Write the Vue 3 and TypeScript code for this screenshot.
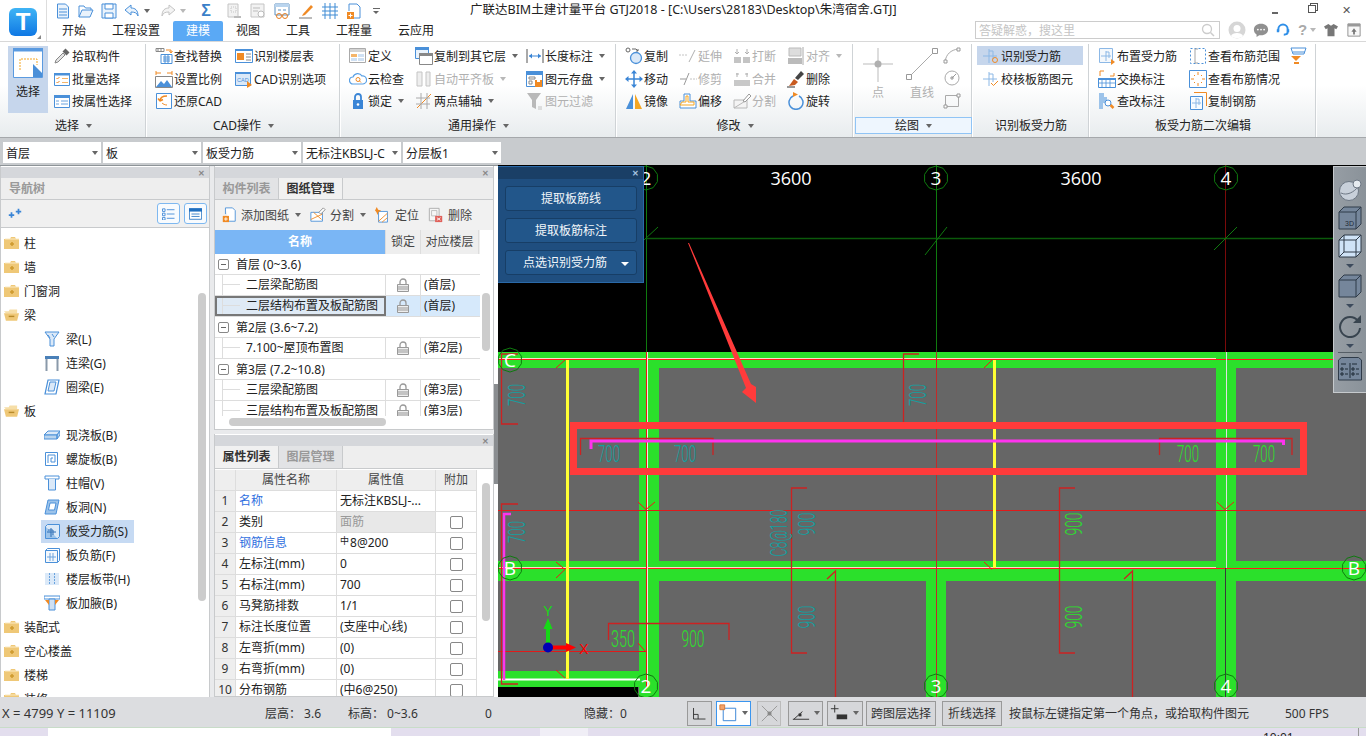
<template>
  <div class="app">
    <svg class="sprite" xmlns="http://www.w3.org/2000/svg">
      <!-- quick access -->
      <symbol id="q-new" viewBox="0 0 16 16"><path d="M2.5 1h8l3 3v11h-11z" fill="#eaf3fc" stroke="#4a90d9"/><path d="M4 6h8M4 9h8M4 12h8" stroke="#4a90d9"/></symbol>
      <symbol id="q-open" viewBox="0 0 16 16"><path d="M1 14V3h5l1.500 2H13v2" fill="none" stroke="#4a90d9"/><path d="M1 14l3-7h11l-3 7z" fill="#eaf3fc" stroke="#4a90d9"/></symbol>
      <symbol id="q-save" viewBox="0 0 16 16"><path d="M1 1h14v14H1z" fill="#eaf3fc" stroke="#4a90d9"/><path d="M4 1h8v5H4zM4 10h8v5H4z" fill="#fff" stroke="#4a90d9"/></symbol>
      <symbol id="q-undo" viewBox="0 0 16 16"><path d="M7 2L1 7l6 5V9c4 0 6 1 7 4 0-6-3-8-7-8z" fill="#eaf3fc" stroke="#4a90d9"/></symbol>
      <symbol id="q-redo" viewBox="0 0 16 16"><path d="M9 2l6 5-6 5V9c-4 0-6 1-7 4 0-6 3-8 7-8z" fill="#f4f4f4" stroke="#c4c4c4"/></symbol>
      <symbol id="q-cad" viewBox="0 0 16 16"><path d="M2 1h10v13H2z" fill="#f2f2f2" stroke="#c4c4c4"/><path d="M5 4h5v5H5z" fill="none" stroke="#c4c4c4" stroke-dasharray="1 1"/><path d="M8 14h7" stroke="#bbb" stroke-width="2"/></symbol>
      <symbol id="q-find" viewBox="0 0 16 16"><path d="M1 1h13v13H1z" fill="#f2f2f2" stroke="#c4c4c4"/><path d="M3 5h7M3 8h5" stroke="#bbb"/><circle cx="11" cy="11" r="3" fill="#fff" stroke="#bbb"/></symbol>
      <symbol id="q-calc" viewBox="0 0 16 16"><path d="M1 1h14v11H1z" fill="#fff" stroke="#5b8fc0"/><path d="M1 1h14v3H1z" fill="#b9d4ee"/><path d="M4 7h3M9 7h3" stroke="#5b8fc0"/><circle cx="5" cy="13" r="2.500" fill="none" stroke="#e67e22"/><circle cx="11" cy="13" r="2.500" fill="none" stroke="#e67e22"/></symbol>
      <symbol id="q-pen" viewBox="0 0 16 16"><path d="M5 11l8-9 2 2-8 8-3 1z" fill="#f08a24"/><path d="M1 15h13" stroke="#777"/></symbol>
      <symbol id="q-grid" viewBox="0 0 16 16"><path d="M3 0v16M8 0v16M13 0v16M0 4h16M0 8h16M0 12h16" stroke="#3f8bd4" fill="none"/></symbol>
      <symbol id="q-add" viewBox="0 0 16 16"><path d="M3 1h8l3 3v11H8" fill="#fff" stroke="#4a90d9"/><path d="M3 1v7" stroke="#4a90d9"/><path d="M1 9h7v7H1z" fill="#f08a24"/><path d="M4.500 10.500v4M2.500 12.500h4" stroke="#fff"/></symbol>
      <!-- top right -->
      <symbol id="t-user" viewBox="0 0 18 18"><circle cx="9" cy="9" r="8.500" fill="#d6d6d6"/><circle cx="9" cy="7.500" r="3.500" fill="#fff"/><path d="M3 15c1-4 11-4 12 0-3 3-9 3-12 0z" fill="#fff"/></symbol>
      <symbol id="t-chat" viewBox="0 0 18 18"><path d="M9 2c5 0 8 3 8 6.500S14 15 9 15H7l-3 2v-3C2 13 1 11 1 8.500 1 5 4 2 9 2z" fill="#909090"/><circle cx="5.500" cy="8.500" r="1" fill="#fff"/><circle cx="9" cy="8.500" r="1" fill="#fff"/><circle cx="12.500" cy="8.500" r="1" fill="#fff"/></symbol>
      <symbol id="t-head" viewBox="0 0 18 18"><path d="M3 11V8a6 6 0 0 1 12 0v4c0 2-2 3-5 3" fill="none" stroke="#2f8fe8" stroke-width="2.500"/><path d="M1 8h3v4H1zM14 8h3v4h-3z" fill="#2f8fe8"/></symbol>
      <symbol id="t-shirt" viewBox="0 0 16 16"><path d="M5 1L0 4l2 3 2-1v9h8V6l2 1 2-3-5-3-3 2z" fill="#777"/></symbol>
      <symbol id="t-up" viewBox="0 0 16 16"><path d="M1 1h14v14H1z" fill="#f7f7f7" stroke="#888"/><path d="M1 1h14v3H1z" fill="#999"/><path d="M8 6l3 4H9v3H7v-3H5z" fill="#777"/></symbol>
      <symbol id="t-search" viewBox="0 0 14 14"><circle cx="6" cy="6" r="4.500" fill="none" stroke="#ccc" stroke-width="1.300"/><path d="M9.500 9.500L13 13" stroke="#ccc" stroke-width="1.500"/></symbol>
      <!-- ribbon -->
      <symbol id="selbig" viewBox="0 0 30 30"><path d="M.5.500h29v29H.5z" fill="#fff" stroke="#5a9ae0"/><path d="M0 0h30v3.500H0z" fill="#5a9ae0"/><path d="M7 22V11h17v6" fill="none" stroke="#f5a623" stroke-dasharray="2 1"/><path d="M20 16l9 9v4h-9z" fill="#4a8fd8"/></symbol>
      <symbol id="pick" viewBox="0 0 18 18"><path d="M2 16l1-3 7-7 2 2-7 7z" fill="#e4e4e4" stroke="#888"/><path d="M9.500 4.500l3-3 4 4-3 3z" fill="#666"/></symbol>
      <symbol id="batch" viewBox="0 0 18 18"><path d="M1.500 3.500h15v12h-15z" fill="#fff" stroke="#4a90d9"/><path d="M1 3h16v2.500H1z" fill="#4a90d9"/><path d="M3.500 8l1 1 2-2M3.500 12l1 1 2-2" fill="none" stroke="#f08a24"/><path d="M9 8.500h6M9 12.500h6" stroke="#f5b56a"/></symbol>
      <symbol id="attrs" viewBox="0 0 18 18"><path d="M1.500 3.500h15v12h-15z" fill="#fff" stroke="#4a90d9"/><path d="M1 3h16v3H1z" fill="#4a90d9"/><path d="M3 9h3M8 9h7M3 12h3M8 12h7" stroke="#6aa3de"/></symbol>
      <symbol id="findrep" viewBox="0 0 18 18"><path d="M1 1.500h8v3H1z" fill="#fff" stroke="#888"/><path d="M3 1.500v3M6 1.500v3" stroke="#888"/><path d="M6 7.500h11v9H6z" fill="#fff" stroke="#4a90d9"/><path d="M8 10h7M8 12h7M8 14h7M10 7.500v9M13 7.500v9" stroke="#4a90d9"/><path d="M11 3h5v2M14.500 4l1.500 2 1.500-2" fill="none" stroke="#f08a24"/></symbol>
      <symbol id="floors" viewBox="0 0 18 18"><path d="M.5 2.500h17v13H.5z" fill="#fff" stroke="#4a90d9"/><path d="M0 2h18v2H0z" fill="#4a90d9"/><path d="M2 6h7v7H2z" fill="#f08a24"/><path d="M11 7h5M11 10h5M11 13h5" stroke="#888"/></symbol>
      <symbol id="scale" viewBox="0 0 18 18"><path d="M.5 6.500h17v11H.5z" fill="#fff" stroke="#888"/><path d="M1 17l5-6 3 3 3-4 5 7z" fill="#4a90d9"/><path d="M1 3h5M12 3h5M1 1v4M17 1v4" stroke="#f08a24"/></symbol>
      <symbol id="cadopt" viewBox="0 0 18 18"><path d="M.5 2.500h15v13H.5z" fill="#dbe9f8" stroke="#4a90d9"/><path d="M0 2h16v2H0z" fill="#4a90d9"/><text x="2" y="12" font-size="5.500" fill="#4a90d9" font-family="Liberation Sans">CAD</text><path d="M12 11l5 4-5 3z" fill="#f08a24"/></symbol>
      <symbol id="restore" viewBox="0 0 18 18"><path d="M1.500 1.500h15v15h-15z" fill="#fff" stroke="#4a90d9"/><path d="M5 9c0-3 2-5 7-5M5 9l-2-2.500M5 9l3-1.500" fill="none" stroke="#f08a24" stroke-width="1.500"/><path d="M12 13c-2 0-4-1-5-2" fill="none" stroke="#f08a24"/></symbol>
      <symbol id="define" viewBox="0 0 18 18"><path d="M.5 1.500h16v14H.5z" fill="#fff" stroke="#aaa"/><path d="M1 2h15v3H1z" fill="#d4d4d4"/><path d="M2 7h6v3H2z" fill="#f5b56a"/><path d="M9 7h6v3H9zM2 11h6v3H2zM9 11h6v3H9z" fill="#cfe0f3"/></symbol>
      <symbol id="cloud" viewBox="0 0 18 18"><path d="M4 14a3.500 3.500 0 0 1 0-7 5 5 0 0 1 9-1 4 4 0 0 1 1 8z" fill="#fff" stroke="#5aa0e4" stroke-width="1.200"/><circle cx="9" cy="9.500" r="2" fill="none" stroke="#f08a24"/><path d="M10.500 11l1.500 1.500" stroke="#f08a24"/></symbol>
      <symbol id="lock" viewBox="0 0 18 18"><path d="M6 9V5a3 3 0 0 1 6 0v4" fill="none" stroke="#3a85d6" stroke-width="1.800"/><path d="M4 8h10v9H4z" fill="#3a85d6" rx="1"/><circle cx="9" cy="12.500" r="1.300" fill="#fff"/></symbol>
      <symbol id="copyto" viewBox="0 0 18 18"><path d="M.5.500h13v11H.5z" fill="#eaf3fc" stroke="#4a90d9"/><path d="M0 0h14v3H0z" fill="#4a90d9"/><path d="M4.500 6.500h13v11h-13z" fill="#fff" stroke="#888"/><path d="M4 6h14v3H4z" fill="#888"/></symbol>
      <symbol id="align" viewBox="0 0 18 18"><path d="M2 2h5v14H2zM11 2h4v14h-4z" fill="#eee" stroke="#c4c4c4"/></symbol>
      <symbol id="twopt" viewBox="0 0 18 18"><path d="M2 16L16 2" stroke="#f08a24"/><path d="M1 6h14M1 12h14M6 1v16M12 1v16" stroke="#aaa"/></symbol>
      <symbol id="length" viewBox="0 0 18 18"><path d="M1 2v14M17 2v14" stroke="#555"/><path d="M3 9h12" stroke="#3a85d6"/><path d="M3 9l3-2.500v5zM15 9l-3-2.500v5z" fill="#3a85d6"/></symbol>
      <symbol id="save2" viewBox="0 0 18 18"><path d="M.5 1.500h16v15H.5z" fill="#fff" stroke="#4a90d9"/><path d="M0 1h17v4H0z" fill="#4a90d9"/><path d="M3 7h6v2H3zM3 11h3v3H3z" fill="none" stroke="#888"/><path d="M9 10h7v7H9z" fill="#f08a24"/><path d="M11 10h3v2h-3z" fill="#fff"/></symbol>
      <symbol id="filter" viewBox="0 0 18 18"><path d="M1 1h14l-5 7v9l-4-2V8z" fill="#b9b9b9"/><path d="M12 15h4M12 17h4" stroke="#c4c4c4"/></symbol>
      <symbol id="copy" viewBox="0 0 18 18"><circle cx="3" cy="3" r="2" fill="#fff" stroke="#666"/><path d="M7 2h4l2 2M13 2v2h-2" fill="none" stroke="#666"/><circle cx="11" cy="11" r="5.500" fill="#dbe9f8" stroke="#4a90d9" stroke-width="1.300"/></symbol>
      <symbol id="move" viewBox="0 0 18 18"><path d="M3 9h12M9 3v12" stroke="#3a85d6" stroke-width="1.500"/><path d="M9 0l3 3.500H6zM9 18l3-3.500H6zM0 9l3.500 3v-6zM18 9l-3.500 3v-6z" fill="#3a85d6"/></symbol>
      <symbol id="mirror" viewBox="0 0 18 18"><path d="M8 2v15L1 17z" fill="#4a90d9"/><path d="M10 2v15h7z" fill="#f5a623"/></symbol>
      <symbol id="extend" viewBox="0 0 18 18"><path d="M0 8h9" stroke="#c4c4c4" stroke-dasharray="2 1"/><path d="M10 15l6-12" stroke="#b0b0b0"/></symbol>
      <symbol id="trim" viewBox="0 0 18 18"><path d="M1 9h6" stroke="#999"/><path d="M5 15l5-12" stroke="#999"/><path d="M11 9h7" stroke="#c4c4c4" stroke-dasharray="2 1"/></symbol>
      <symbol id="offset" viewBox="0 0 18 18"><path d="M1 16V9h4V2h6v7h6v7z" fill="#fff" stroke="#4a90d9"/><path d="M1 13h14V10H9V4H7v6H3z" fill="#fff" stroke="#f5a623"/></symbol>
      <symbol id="break" viewBox="0 0 18 18"><path d="M1 10h7v6H1zM10 10h7v6h-7z" fill="#c4c4c4"/><path d="M4 2v5M2 5l2 2 2-2M14 2v5M12 5l2 2 2-2" fill="none" stroke="#b0b0b0"/></symbol>
      <symbol id="merge" viewBox="0 0 18 18"><path d="M1 10h16v6H1z" fill="#c8c8c8"/><path d="M3 4h3M12 4h3M4 3v4M14 3v4" stroke="#b0b0b0"/></symbol>
      <symbol id="split" viewBox="0 0 18 18"><path d="M1 8h13v8H1zM1 16l13-8" fill="#f4f4f4" stroke="#b8b8b8"/><path d="M10 9l6-7 2 2-6 6z" fill="#fff" stroke="#999"/></symbol>
      <symbol id="alignb" viewBox="0 0 18 18"><path d="M2 1h12v8H2z" fill="#ddd" stroke="#bbb"/><path d="M1 11h14v6H1z" fill="#bbb"/><path d="M16 0v18" stroke="#aaa"/></symbol>
      <symbol id="del" viewBox="0 0 18 18"><path d="M8 8l6-7 3 3-6 6z" fill="#444"/><path d="M7 9l4 3-3 3-6 1z" fill="#c85a20"/><path d="M0 17h8" stroke="#333"/></symbol>
      <symbol id="rot" viewBox="0 0 18 18"><path d="M6 4a7 7 0 1 0 6 0" fill="none" stroke="#4a90d9" stroke-width="1.500"/><path d="M6 0l5 2.500L6 5z" fill="#f08a24"/></symbol>
      <symbol id="pt" viewBox="0 0 36 36"><path d="M18 2v34M3 18h30" stroke="#bbb"/><circle cx="18" cy="18" r="3.500" fill="#b0b0b0"/></symbol>
      <symbol id="ln" viewBox="0 0 36 36"><path d="M5 31L31 5" stroke="#aaa"/><path d="M2.500 28.500h5v5h-5zM28.500 2.500h5v5h-5z" fill="#fff" stroke="#999"/></symbol>
      <symbol id="arc" viewBox="0 0 18 18"><path d="M2 16C3 8 8 4 15 3" fill="none" stroke="#aaa"/><path d="M1 14h3v3H1zM14 2h3v3h-3z" fill="#fff" stroke="#999"/></symbol>
      <symbol id="circ" viewBox="0 0 18 18"><circle cx="9" cy="9" r="7" fill="none" stroke="#aaa"/><path d="M8 8h2v2H8zM9 9l4-4" fill="none" stroke="#999"/></symbol>
      <symbol id="rct" viewBox="0 0 18 18"><path d="M2.500 3.500h13v11h-13z" fill="none" stroke="#aaa"/><path d="M1 13h3v3H1zM14 2h3v3h-3z" fill="#fff" stroke="#999"/></symbol>
      <symbol id="recog" viewBox="0 0 18 18"><path d="M1 9h14M7 2v14" stroke="#8cb8e6"/><path d="M7 4h4v8" fill="none" stroke="#8cb8e6"/><circle cx="13" cy="13" r="2.500" fill="none" stroke="#f08a24"/></symbol>
      <symbol id="verify" viewBox="0 0 18 18"><path d="M1 9h14M7 2v14" stroke="#8cb8e6"/><path d="M7 4h4v8" fill="none" stroke="#8cb8e6"/><path d="M9 13l2.500 2.500L16 11" fill="none" stroke="#f08a24"/></symbol>
      <symbol id="place" viewBox="0 0 18 18"><path d="M1.500 1.500h13v14h-13z" fill="#f4f8fc" stroke="#8cb8e6"/><path d="M3 9h10M8 4v10M8 5h3v6" fill="none" stroke="#8cb8e6"/><path d="M13 12l4 3-4 3z" fill="#f08a24"/></symbol>
      <symbol id="swap" viewBox="0 0 18 18"><path d="M.5 8.500h17v9H.5z" fill="#fff" stroke="#4a90d9"/><path d="M0 8h18v2H0z" fill="#4a90d9"/><path d="M4 10v8M8 10v8M12 10v8M0 13h18" stroke="#4a90d9" stroke-width=".8"/><path d="M2 6V1h4M16 3v3h-4" fill="none" stroke="#f08a24"/></symbol>
      <symbol id="check" viewBox="0 0 18 18"><path d="M1 1h5v4h3v6H5v6H1z" fill="#9cc3ea"/><circle cx="10" cy="11" r="3" fill="#fff" stroke="#4a90d9"/><path d="M12.500 13l3 3" stroke="#f08a24" stroke-width="2.500"/></symbol>
      <symbol id="range" viewBox="0 0 18 18"><path d="M1.500 1.500h15v15h-15z" fill="#fff" stroke="#4a90d9" stroke-dasharray="2 2"/><path d="M9 2h-3v14h3" fill="none" stroke="#a5a5a5"/></symbol>
      <symbol id="status" viewBox="0 0 18 18"><path d="M.5.500h17v17H.5z" fill="#fff" stroke="#4a90d9"/><path d="M9 2v3M9 13v3M2 9h3M13 9h3M5 5l1 1M13 5l-1 1M5 13l1-1M13 13l-1-1" stroke="#f08a24"/></symbol>
      <symbol id="cprebar" viewBox="0 0 18 18"><path d="M5 .500h12.500V14" fill="none" stroke="#f08a24"/><path d="M1.500 4.500h12v13h-12z" fill="#f7fbff" stroke="#4a90d9"/><path d="M3 11h9M7 6v10M7 7h3v6" fill="none" stroke="#8cb8e6"/></symbol>
      <symbol id="flag" viewBox="0 0 18 18"><path d="M2 1h15l-2 6H4z" fill="#fff" stroke="#4a90d9"/><path d="M4 5h12" stroke="#4a90d9"/><path d="M2 9h10l-5 5z" fill="#f08a24"/><path d="M5 15h5v2H5z" fill="#f08a24"/></symbol>
      <!-- nav -->
      <symbol id="fold" viewBox="0 0 15 12"><path d="M0 2h6l1-2h4l1 2h3v10H0z" fill="#efc877"/><path d="M1 2h14" stroke="#fbeac4"/><path d="M6 7h4M8 5v4" stroke="#cf9a2e" stroke-width="1.500"/></symbol>
      <symbol id="foldo" viewBox="0 0 16 12"><path d="M0 2h5l1-2h8v4H2z" fill="#f6dea7"/><path d="M0 4h16l-2 8H2z" fill="#efc877"/><path d="M5 7.500h6" stroke="#b88a2a" stroke-width="1.500"/></symbol>
      <symbol id="b-l" viewBox="0 0 16 16"><path d="M1 1h14L10 8v7H6V8z" fill="#dbe9f8" stroke="#4a90d9"/><path d="M4 4l2 3M8 3l2 3" stroke="#4a90d9"/></symbol>
      <symbol id="b-g" viewBox="0 0 16 16"><path d="M1 1h14v3H1z" fill="#4a80b8"/><path d="M2.500 4v12M13.500 4v12" stroke="#8a99aa" stroke-width="2"/></symbol>
      <symbol id="b-e" viewBox="0 0 16 16"><path d="M4 1h11l-3 14H1z" fill="#fff" stroke="#4a90d9" stroke-width="1.200"/><path d="M6 3h6l-2 9H4z" fill="#dbe9f8" stroke="#4a90d9"/></symbol>
      <symbol id="s-b" viewBox="0 0 16 16"><path d="M0 8l4-4h12l-3 4z" fill="#dbe9f8" stroke="#4a90d9"/><path d="M0 8h13v4H0zM13 8l3-4v4l-3 4z" fill="#b9d4ee" stroke="#4a90d9"/></symbol>
      <symbol id="s-sp" viewBox="0 0 16 16"><path d="M1.500 1.500h12v13h-12z" fill="#fff" stroke="#4a90d9"/><path d="M4 12V4h7v7H7V7h2" fill="none" stroke="#4a90d9"/></symbol>
      <symbol id="s-cap" viewBox="0 0 16 16"><path d="M1 1h14v3H1z" fill="#fff" stroke="#4a90d9"/><path d="M4.500 4v11h7V4" fill="#dbe9f8" stroke="#4a90d9"/></symbol>
      <symbol id="s-hole" viewBox="0 0 16 16"><path d="M4 1h11l-3 14H1z" fill="#9cc3ea" stroke="#4a90d9"/><path d="M6 4h6l-1.500 7H4.500z" fill="#fff" stroke="#4a90d9"/></symbol>
      <symbol id="s-reb" viewBox="0 0 16 16"><path d="M1.500 3.500h12v12h-12z" fill="#9cc3ea" stroke="#4a90d9"/><path d="M1.500 3.500l2-2h12v12l-2 2" fill="#dbe9f8" stroke="#4a90d9"/><path d="M3 9h9M7 5v9M4 7h5v5" fill="none" stroke="#2f6fb5"/></symbol>
      <symbol id="s-neg" viewBox="0 0 16 16"><path d="M1.500 3.500h12v12h-12z" fill="#f4f8fc" stroke="#4a90d9"/><path d="M1.500 3.500l2-2h12v12l-2 2" fill="none" stroke="#4a90d9"/><path d="M3 10h9M6 6v8M9 6v8" fill="none" stroke="#6aa3de"/></symbol>
      <symbol id="s-str" viewBox="0 0 16 16"><path d="M1 2h14v12H1z" fill="#dbe9f8"/><path d="M5.500 2v12M10.500 2v12" stroke="#6aa3de" stroke-dasharray="2 1"/></symbol>
      <symbol id="s-hau" viewBox="0 0 16 16"><path d="M0 1h16v3H0z" fill="#fff" stroke="#4a90d9"/><path d="M5 4h6v11H5z" fill="#cfe0f3" stroke="#4a90d9"/><path d="M1 5h4v5zM15 5h-4v5z" fill="#f08a24"/></symbol>
      <symbol id="spark" viewBox="0 0 18 14"><path d="M1 9h7M4.500 5.500v7" stroke="#3a85d6" stroke-width="2.200"/><path d="M10 4.500h7M13.500 1v7" stroke="#3a85d6" stroke-width="2.200"/></symbol>
      <symbol id="v-list" viewBox="0 0 14 14"><path d="M0 1h3v3H0zM0 6h3v3H0zM0 11h3v3H0z" fill="none" stroke="#3a85d6"/><path d="M5 2h9M5 7h9M5 12h9" stroke="#3a85d6"/></symbol>
      <symbol id="v-panel" viewBox="0 0 16 14"><path d="M.5.500h15v13H.5z" fill="#fff" stroke="#1f6fc0"/><path d="M0 0h16v4H0z" fill="#1f6fc0"/><path d="M3 7h10M3 10h10" stroke="#1f6fc0"/></symbol>
      <!-- drawing manager -->
      <symbol id="d-add" viewBox="0 0 16 18"><path d="M4 1h8l3 3v12H8" fill="#fff" stroke="#4a90d9"/><path d="M4 1v7" stroke="#4a90d9"/><path d="M1 10h7v7H1z" fill="#f08a24"/><path d="M4.500 11.500v4M2.500 13.500h4" stroke="#fff"/></symbol>
      <symbol id="d-split" viewBox="0 0 18 18"><path d="M1 6h13v10H1z" fill="#fff" stroke="#4a90d9"/><path d="M1 14l13-6M4 6l9 8" stroke="#f08a24"/><path d="M10 6l5-5 2 2-5 5z" fill="#fff" stroke="#888"/></symbol>
      <symbol id="d-loc" viewBox="0 0 18 18"><path d="M4 5h10v12H4z" fill="#fff" stroke="#4a90d9"/><path d="M4 16l10-9M8 17l6-5" stroke="#f08a24"/><path d="M2 0l1.500 3L7 4 4 5.500 3 9 1.500 5.500 0 4z" fill="#f08a24"/></symbol>
      <symbol id="d-del" viewBox="0 0 16 18"><path d="M.5 1.500h11v14H.5z" fill="#f6f6f6" stroke="#aaa"/><path d="M3 4h6v6H3z" fill="none" stroke="#bbb"/><path d="M7 10h8v7H7z" fill="#e0605a"/><path d="M9 12l4 3M13 12l-4 3" stroke="#fff"/></symbol>
      <symbol id="padlock" viewBox="0 0 12 14"><path d="M3 6V4a3 3 0 0 1 6 0v2" fill="none" stroke="#999" stroke-width="1.300"/><path d="M.5 6.500h11v7H.5z" fill="#eee" stroke="#999"/><path d="M1 9h10M1 11h10" stroke="#999"/></symbol>
      <!-- right toolbar -->
      <symbol id="r-globe" viewBox="0 0 24 24"><circle cx="11" cy="13" r="9.500" fill="#c8d0da" stroke="#6d7784"/><path d="M3 15c6 3 13-1 17-6" fill="none" stroke="#6d7784"/><circle cx="19" cy="6" r="4" fill="#e6ebf0" stroke="#6d7784"/></symbol>
      <symbol id="r-3d" viewBox="0 0 24 24"><path d="M1 6l5-5h17v17l-5 5H1z" fill="#75869b" stroke="#2f3b49"/><path d="M1 6h17v17M18 6l5-5" fill="none" stroke="#2f3b49"/><text x="7" y="20" font-size="7" fill="#1f2a36" font-family="Liberation Sans">3D</text></symbol>
      <symbol id="r-wire" viewBox="0 0 24 24"><path d="M1 6l5-5h17v17l-5 5H1z" fill="#cfe3f7" stroke="#2f3b49"/><path d="M1 6h17v17M18 6l5-5M6 1v17h17M6 18l-5 5" fill="none" stroke="#2f3b49"/></symbol>
      <symbol id="r-cube" viewBox="0 0 24 24"><path d="M1 6l5-5h17v17l-5 5H1z" fill="#75869b" stroke="#2f3b49"/><path d="M1 6h17v17M18 6l5-5" fill="none" stroke="#2f3b49"/></symbol>
      <symbol id="r-rot" viewBox="0 0 24 24"><path d="M20 7a10 10 0 1 0 2 7" fill="none" stroke="#38444f" stroke-width="2"/><path d="M23 1v8h-8z" fill="#38444f"/></symbol>
      <symbol id="r-tab" viewBox="0 0 24 24"><path d="M.5 3l3-2.500h17L23.500 3v20H.5z" fill="#75869b" stroke="#2f3b49"/><path d="M3 7h5M14 7h5M3 11h2v2H3zM3 16h2v2H3zM14 11h2v2h-2zM14 16h2v2h-2zM7 12h3M7 17h3M18 12h3M18 17h3M12 6v15" fill="none" stroke="#1f2a36"/></symbol>
    </svg>

    <header class="top">
      <div class="logo-col">
        <div class="logo">T</div>
        <i class="logo-corner"></i>
      </div>
      <div class="top-main">
        <div class="title-row">
          <div class="quick">
            <template v-for="q in quick" :key="q.icon">
              <svg class="qi" :style="{ marginRight: q.gap + 'px' }"><use :href="'#' + q.icon" /></svg>
              <i v-if="q.caret" class="caret quick-caret" :class="{ pale: q.pale }"></i>
            </template>
            <span class="sigma">Σ</span>
            <template v-for="q in quick2" :key="q">
              <svg class="qi"><use :href="'#' + q" /></svg>
            </template>
            <i class="overflow-mark"></i>
          </div>
          <div class="title">广联达BIM土建计量平台 GTJ2018 - [C:\Users\28183\Desktop\朱湾宿舍.GTJ]</div>
          <div class="winctl">
            <i class="w-min"></i>
            <i class="w-restore"></i>
            <span class="w-close">✕</span>
          </div>
        </div>
        <div class="tab-row">
          <div v-for="t in tabs" :key="t" class="tab" :class="{ active: t === '建模' }">{{ t }}</div>
          <div class="search">
            <span>答疑解惑，搜这里</span>
            <svg class="search-ic"><use href="#t-search" /></svg>
          </div>
          <div class="top-icons">
            <svg class="ti"><use href="#t-user" /></svg>
            <svg class="ti chat"><use href="#t-chat" /></svg>
            <svg class="ti head"><use href="#t-head" /></svg>
            <span class="help">?</span><i class="caret pale help-caret"></i>
            <svg class="ti shirt"><use href="#t-shirt" /></svg>
            <svg class="ti up"><use href="#t-up" /></svg>
          </div>
        </div>
      </div>
    </header>

    <section class="ribbon">
      <div v-for="g in groups" :key="g.name" class="group" :style="{ width: g.width + 'px' }">
        <div class="group-body" :style="{ paddingLeft: g.pad + 'px' }">
          <div v-if="g.name === '选择'" class="big-sel">
            <svg class="big-sel-ic"><use href="#selbig" /></svg>
            <span>选择</span>
          </div>
          <template v-if="g.name === '绘图'">
            <div class="big-draw"><svg><use href="#pt" /></svg><span>点</span></div>
            <div class="big-draw"><svg><use href="#ln" /></svg><span>直线</span></div>
            <div class="draw-small">
              <svg><use href="#arc" /></svg>
              <svg><use href="#circ" /></svg>
              <svg><use href="#rct" /></svg>
            </div>
          </template>
          <div v-for="(c, i) in g.cols" :key="i" class="col" :style="{ width: c.w ? c.w + 'px' : undefined }">
            <div v-for="it in c.items" :key="it.label" class="item" :class="{ off: it.off, hi: it.hi }">
              <svg class="item-ic"><use :href="'#' + it.icon" /></svg>
              <span>{{ it.label }}</span>
              <i v-if="it.caret" class="caret" :class="{ pale: it.off }"></i>
            </div>
          </div>
          <svg v-if="g.name === '板受力筋二次编辑'" class="flag-ic"><use href="#flag" /></svg>
        </div>
        <div class="group-label" :class="{ framed: g.name === '绘图' }">
          <span>{{ g.name }}</span>
          <i v-if="g.caret" class="caret"></i>
        </div>
      </div>
    </section>

    <section class="combos">
      <div v-for="c in combos" :key="c" class="combo">
        <span>{{ c }}</span>
        <i class="caret"></i>
      </div>
    </section>

    <main class="main">
      <aside class="nav">
        <div class="strip"><span class="x">✕</span></div>
        <div class="nav-title">导航树</div>
        <div class="nav-tools">
          <svg class="spark"><use href="#spark" /></svg>
          <div class="view-btn"><svg><use href="#v-list" /></svg></div>
          <div class="view-btn"><svg><use href="#v-panel" /></svg></div>
        </div>
        <div class="tree">
          <div v-for="n in tree" :key="n.label" class="tree-row" :class="{ child: n.child }">
            <svg v-if="!n.child" class="folder"><use :href="n.open ? '#foldo' : '#fold'" /></svg>
            <div v-else class="tree-child" :class="{ sel: n.sel }">
              <svg class="child-ic"><use :href="'#' + n.icon" /></svg>
              <span>{{ n.label }}</span>
            </div>
            <span v-if="!n.child">{{ n.label }}</span>
          </div>
          <i class="vbar tree-bar"></i>
        </div>
      </aside>

      <div class="mid">
        <div class="panel drawing">
          <div class="strip"><span class="x">✕</span></div>
          <div class="tabs">
            <div class="ptab">构件列表</div>
            <div class="ptab on">图纸管理</div>
          </div>
          <div class="draw-tools">
            <div class="dt"><svg class="dt-ic"><use href="#d-add" /></svg>添加图纸<i class="caret"></i></div>
            <div class="dt"><svg class="dt-ic"><use href="#d-split" /></svg>分割<i class="caret"></i></div>
            <div class="dt"><svg class="dt-ic"><use href="#d-loc" /></svg>定位</div>
            <div class="dt"><svg class="dt-ic"><use href="#d-del" /></svg>删除</div>
          </div>
          <div class="sheet">
            <div class="sheet-head">
              <div class="name-h">名称</div>
              <div>锁定</div>
              <div>对应楼层</div>
            </div>
            <template v-for="r in sheets" :key="r.name">
              <div v-if="r.group" class="sheet-group">
                <i class="expander"></i>{{ r.name }}
              </div>
              <div v-else class="sheet-row" :class="{ sel: r.sel }">
                <div class="sheet-name"><i class="branch"></i>{{ r.name }}</div>
                <div class="sheet-lock"><svg><use href="#padlock" /></svg></div>
                <div class="sheet-floor">{{ r.floor }}</div>
              </div>
            </template>
          </div>
          <div class="hbar-row"><i class="hbar"></i></div>
          <i class="vbar sheet-bar"></i>
        </div>

        <div class="panel props">
          <div class="strip"><span class="x">✕</span></div>
          <div class="tabs">
            <div class="ptab on">属性列表</div>
            <div class="ptab">图层管理</div>
          </div>
          <div class="prop-table">
            <div class="prop-row prop-head">
              <div></div>
              <div>属性名称</div>
              <div>属性值</div>
              <div>附加</div>
            </div>
            <div v-for="(p, i) in props" :key="p.name" class="prop-row">
              <div class="idx">{{ i + 1 }}</div>
              <div class="pname" :class="{ link: p.link }">{{ p.name }}</div>
              <div class="pval" :class="{ ro: p.ro }">
                <sup v-if="p.bar" class="bar-mark">中</sup>{{ p.value }}
              </div>
              <div class="padd"><i v-if="i > 0" class="chk"></i></div>
            </div>
          </div>
          <i class="vbar prop-bar"></i>
        </div>
      </div>

      <div class="splitter"></div>

      <div class="canvas">
        <svg class="cad" viewBox="498 165 868 532" width="868" height="532">
          <rect x="498" y="165" width="868" height="532" fill="#000" />
          <rect x="498" y="352" width="868" height="345" fill="#666" />
          <rect x="498" y="687" width="140" height="10" fill="#000" />
          <!-- walls -->
          <g fill="#2be02b">
            <rect x="498" y="352" width="868" height="16" />
            <rect x="498" y="561" width="868" height="20" />
            <rect x="498" y="671" width="141" height="16" />
            <rect x="639" y="352" width="20" height="345" />
            <rect x="926" y="561" width="20" height="136" />
            <rect x="1216" y="352" width="20" height="345" />
          </g>
          <!-- axes -->
          <path d="M646.500 165V352M936.500 165V352" stroke="#0f7a0f" />
          <path d="M1225.500 165V352" stroke="#7a0a0a" />
          <path d="M646 238.500H1333" stroke="#0b5a0b" stroke-width="1.500" />
          <path d="M644 240L658 227M925 255L947 227M1214 250L1237 227" stroke="#0f7a0f" />
          <path d="M498 359.500H1366M498 568.500H1366" stroke="#ff1a1a" />
          <path d="M498 358.500H1216M498 567.500H1216" stroke="#f6e0c8" />
          <path d="M647.500 352V687" stroke="#e8f5e0" />
          <path d="M646.500 352V687" stroke="#f01414" />
          <path d="M936.500 352V697" stroke="#c22a2a" />
          <path d="M1226.500 352V568" stroke="#e0e0e0" />
          <path d="M1225.500 568V697" stroke="#3a3a3a" />
          <path d="M498 510.500H1366" stroke="#e01a1a" />
          <path d="M498 651.500H646" stroke="#e01a1a" />
          <path d="M498 679.500H640" stroke="#fff" stroke-width="2" />

          <!-- brackets -->
          <g fill="none" stroke="#cc2222" stroke-width="1.300">
            <path d="M518 354H501.500V424H518" />
            <path d="M919 354H903.500V424H919" />
            <path d="M518 504H501.500V684H518" />
            <path d="M807 488H791.500V653H807" />
            <path d="M1075 488H1059.500V653H1075" />
            <path d="M608.500 640V623.500H729V640" />
            <path d="M580.500 455V438.500H713V455" />
            <path d="M1159.500 455V438.500H1292V455" />
            <path d="M835.500 697V571L827 579" />
            <path d="M1132.500 697V571L1124 579" />
          </g>
          <g fill="none" stroke="#f01818">
            <path d="M638 502L646 509.500L655 502" />
            <path d="M1217 502L1225 509.500L1234 502" />
            <path d="M556 562L565 569.500L556 578" />
            <path d="M984 562L992 569.500" />
            <path d="M556 670L565 678" />
            <path d="M556 368L565 360" />
            <path d="M984 368L992 360" />
            <path d="M638 643L646 652" />
          </g>
          <!-- slab bars -->
          <rect x="566" y="360" width="3" height="319" fill="#ffff33" />
          <rect x="993" y="360" width="3" height="208" fill="#ffff33" />
          <path d="M591 449V441H1283.500V445" fill="none" stroke="#ff33ee" stroke-width="3" />
          <path d="M511 514H504V680" fill="none" stroke="#ff33ee" stroke-width="2.500" />
          <!-- labels -->
          <g font-family="Roboto, Liberation Sans, sans-serif" font-size="24" font-weight="300">
            <text v-for="l in cadLabels" :key="l.text + l.x + l.y" :fill="l.fill" :transform="`translate(${l.x} ${l.y}) rotate(${l.r})`" :textLength="l.w" lengthAdjust="spacingAndGlyphs" text-anchor="middle">{{ l.text }}</text>
          </g>
          <!-- red marker -->
          <rect x="573.500" y="425.500" width="730" height="46" fill="none" stroke="#ff3b3b" stroke-width="7" />
          <polygon points="688,243 689,243 751,384 756,387 756,403 742,392 746,388" fill="#ff3b3b" />
          <!-- axis bubbles -->
          <g v-for="b in bubbles" :key="b.t + b.x + b.y">
            <polygon :points="ring(b.x, b.y)" fill="none" stroke="#0f7a0f" />
            <text :x="b.x" :y="b.y + 7" fill="#fff" font-size="19" font-family="Open Sans, sans-serif" text-anchor="middle">{{ b.t }}</text>
          </g>
          <text x="791" y="185" fill="#fff" font-size="18" font-family="Open Sans, sans-serif" text-anchor="middle">3600</text>
          <text x="1081" y="185" fill="#fff" font-size="18" font-family="Open Sans, sans-serif" text-anchor="middle">3600</text>
          <!-- origin -->
          <path d="M548 644V625" stroke="#16d916" stroke-width="4" />
          <polygon points="548,618 552.500,629 543.500,629" fill="#16d916" />
          <path d="M552 647.500H568" stroke="#f00" stroke-width="4" />
          <polygon points="576,647.500 566,643 566,652" fill="#f00" />
          <circle cx="548" cy="647.500" r="5" fill="#0000b4" />
          <text x="548" y="616" fill="#16d916" font-size="14" font-family="Liberation Sans, sans-serif" text-anchor="middle">Y</text>
          <text x="584" y="654" fill="#f00" font-size="14" font-family="Liberation Sans, sans-serif" text-anchor="middle">X</text>
        </svg>

        <div class="palette">
          <div class="pal-head"><span class="x">✕</span></div>
          <div class="pal-btn">提取板筋线</div>
          <div class="pal-btn">提取板筋标注</div>
          <div class="pal-btn pal-drop">点选识别受力筋<i class="caret white"></i></div>
        </div>

        <div class="rtools">
          <svg><use href="#r-globe" /></svg>
          <svg><use href="#r-3d" /></svg>
          <svg><use href="#r-wire" /></svg>
          <i class="caret dark"></i>
          <svg><use href="#r-cube" /></svg>
          <i class="caret dark"></i>
          <svg><use href="#r-rot" /></svg>
          <i class="caret dark"></i>
          <hr />
          <svg><use href="#r-tab" /></svg>
        </div>
      </div>
    </main>

    <footer class="status">
      <span class="st coords">X = 4799 Y = 11109</span>
      <span class="st s-floor">层高：&nbsp;3.6</span>
      <span class="st s-elev">标高：&nbsp;0~3.6</span>
      <span class="st s-zero">0</span>
      <span class="st s-hide">隐藏：0</span>
      <div class="sb w25">
        <svg viewBox="0 0 25 24"><path d="M6 6v12h13M6 13h5v5" fill="none" stroke="#333" /></svg>
      </div>
      <div class="sb w35 on">
        <svg viewBox="0 0 22 24"><path d="M5.500 6.500h13v13h-13z" fill="none" stroke="#3a85d6" /><path d="M2 3h5v5H2z" fill="#f5a36a" stroke="#d67a3a" /></svg>
        <i class="caret"></i>
      </div>
      <div class="sb w24 dim">
        <svg viewBox="0 0 24 24"><path d="M4 4l16 16M20 4L4 20" stroke="#999" /><rect x="10" y="10" width="4" height="4" fill="#888" /></svg>
      </div>
      <div class="sb w35">
        <svg viewBox="0 0 22 24"><path d="M3 18h17M4 18l9-8" fill="none" stroke="#333" /><rect x="9" y="12" width="3" height="3" fill="#333" /></svg>
        <i class="caret"></i>
      </div>
      <div class="sb w36">
        <svg viewBox="0 0 24 24"><path d="M7 3v8M3 7h8" stroke="#333" /><rect x="9" y="13" width="11" height="5" fill="#333" /></svg>
        <i class="caret"></i>
      </div>
      <div class="sb text w70">跨图层选择</div>
      <div class="sb text w60">折线选择</div>
      <span class="st hint">按鼠标左键指定第一个角点，或拾取构件图元</span>
      <span class="st fps">500 FPS</span>
    </footer>

    <div class="taskbar">
      <i class="seg seg-a"></i>
      <i class="seg seg-b"></i>
      <i class="seg seg-c"></i>
      <i class="seg seg-d"></i>
      <span class="clock">10:01</span>
      <i class="tb-line"></i>
    </div>
  </div>
</template>

<script setup lang="ts">
interface RibbonItem {
  label: string
  icon: string
  off?: boolean
  caret?: boolean
  hi?: boolean
}

interface RibbonCol {
  w?: number
  items: RibbonItem[]
}

interface RibbonGroup {
  name: string
  width: number
  pad: number
  caret?: boolean
  cols: RibbonCol[]
}

const quick = [
  { icon: 'q-new', gap: 7 },
  { icon: 'q-open', gap: 7 },
  { icon: 'q-save', gap: 7 },
  { icon: 'q-undo', gap: 4, caret: true },
  { icon: 'q-redo', gap: 4, caret: true, pale: true }
]
const quick2 = ['q-cad', 'q-find', 'q-calc', 'q-pen', 'q-grid', 'q-add']

const tabs = ['开始', '工程设置', '建模', '视图', '工具', '工程量', '云应用']

const groups: RibbonGroup[] = [
  {
    name: '选择',
    width: 146,
    pad: 8,
    caret: true,
    cols: [
      {
        items: [
          { label: '拾取构件', icon: 'pick' },
          { label: '批量选择', icon: 'batch' },
          { label: '按属性选择', icon: 'attrs' }
        ]
      }
    ]
  },
  {
    name: 'CAD操作',
    width: 194,
    pad: 9,
    caret: true,
    cols: [
      {
        w: 80,
        items: [
          { label: '查找替换', icon: 'findrep' },
          { label: '设置比例', icon: 'scale' },
          { label: '还原CAD', icon: 'restore' }
        ]
      },
      {
        items: [
          { label: '识别楼层表', icon: 'floors' },
          { label: 'CAD识别选项', icon: 'cadopt' }
        ]
      }
    ]
  },
  {
    name: '通用操作',
    width: 276,
    pad: 9,
    caret: true,
    cols: [
      {
        w: 66,
        items: [
          { label: '定义', icon: 'define' },
          { label: '云检查', icon: 'cloud' },
          { label: '锁定', icon: 'lock', caret: true }
        ]
      },
      {
        w: 111,
        items: [
          { label: '复制到其它层', icon: 'copyto', caret: true },
          { label: '自动平齐板', icon: 'align', off: true, caret: true },
          { label: '两点辅轴', icon: 'twopt', caret: true }
        ]
      },
      {
        items: [
          { label: '长度标注', icon: 'length', caret: true },
          { label: '图元存盘', icon: 'save2', caret: true },
          { label: '图元过滤', icon: 'filter', off: true }
        ]
      }
    ]
  },
  {
    name: '修改',
    width: 237,
    pad: 9,
    caret: true,
    cols: [
      {
        w: 54,
        items: [
          { label: '复制', icon: 'copy' },
          { label: '移动', icon: 'move' },
          { label: '镜像', icon: 'mirror' }
        ]
      },
      {
        w: 54,
        items: [
          { label: '延伸', icon: 'extend', off: true },
          { label: '修剪', icon: 'trim', off: true },
          { label: '偏移', icon: 'offset' }
        ]
      },
      {
        w: 54,
        items: [
          { label: '打断', icon: 'break', off: true },
          { label: '合并', icon: 'merge', off: true },
          { label: '分割', icon: 'split', off: true }
        ]
      },
      {
        items: [
          { label: '对齐', icon: 'alignb', off: true, caret: true },
          { label: '删除', icon: 'del' },
          { label: '旋转', icon: 'rot' }
        ]
      }
    ]
  },
  { name: '绘图', width: 119, pad: 3, caret: true, cols: [] },
  {
    name: '识别板受力筋',
    width: 117,
    pad: 5,
    cols: [
      {
        items: [
          { label: '识别受力筋', icon: 'recog', hi: true },
          { label: '校核板筋图元', icon: 'verify' }
        ]
      }
    ]
  },
  {
    name: '板受力筋二次编辑',
    width: 227,
    pad: 9,
    cols: [
      {
        w: 91,
        items: [
          { label: '布置受力筋', icon: 'place' },
          { label: '交换标注', icon: 'swap' },
          { label: '查改标注', icon: 'check' }
        ]
      },
      {
        w: 100,
        items: [
          { label: '查看布筋范围', icon: 'range' },
          { label: '查看布筋情况', icon: 'status' },
          { label: '复制钢筋', icon: 'cprebar' }
        ]
      }
    ]
  }
]

const combos = ['首层', '板', '板受力筋', '无标注KBSLJ-C', '分层板1']

const tree = [
  { label: '柱' },
  { label: '墙' },
  { label: '门窗洞' },
  { label: '梁', open: true },
  { label: '梁(L)', child: true, icon: 'b-l' },
  { label: '连梁(G)', child: true, icon: 'b-g' },
  { label: '圈梁(E)', child: true, icon: 'b-e' },
  { label: '板', open: true },
  { label: '现浇板(B)', child: true, icon: 's-b' },
  { label: '螺旋板(B)', child: true, icon: 's-sp' },
  { label: '柱帽(V)', child: true, icon: 's-cap' },
  { label: '板洞(N)', child: true, icon: 's-hole' },
  { label: '板受力筋(S)', child: true, icon: 's-reb', sel: true },
  { label: '板负筋(F)', child: true, icon: 's-neg' },
  { label: '楼层板带(H)', child: true, icon: 's-str' },
  { label: '板加腋(B)', child: true, icon: 's-hau' },
  { label: '装配式' },
  { label: '空心楼盖' },
  { label: '楼梯' },
  { label: '装修' }
]

const sheets = [
  { name: '首层 (0~3.6)', group: true },
  { name: '二层梁配筋图', floor: '(首层)' },
  { name: '二层结构布置及板配筋图', floor: '(首层)', sel: true },
  { name: '第2层 (3.6~7.2)', group: true },
  { name: '7.100~屋顶布置图', floor: '(第2层)' },
  { name: '第3层 (7.2~10.8)', group: true },
  { name: '三层梁配筋图', floor: '(第3层)' },
  { name: '三层结构布置及板配筋图', floor: '(第3层)' }
]

const props = [
  { name: '名称', value: '无标注KBSLJ-...', link: true },
  { name: '类别', value: '面筋', ro: true },
  { name: '钢筋信息', value: '8@200', link: true, bar: true },
  { name: '左标注(mm)', value: '0' },
  { name: '右标注(mm)', value: '700' },
  { name: '马凳筋排数', value: '1/1' },
  { name: '标注长度位置', value: '(支座中心线)' },
  { name: '左弯折(mm)', value: '(0)' },
  { name: '右弯折(mm)', value: '(0)' },
  { name: '分布钢筋', value: '(中6@250)' }
]

const teal = '#12a0a0'
const lime = '#2be02b'
const cadLabels = [
  { text: '700', x: 609, y: 462, r: 0, w: 22, fill: teal },
  { text: '700', x: 685, y: 462, r: 0, w: 22, fill: teal },
  { text: '700', x: 1188, y: 462, r: 0, w: 22, fill: lime },
  { text: '700', x: 1264, y: 462, r: 0, w: 22, fill: lime },
  { text: '700', x: 525, y: 395, r: -90, w: 22, fill: teal },
  { text: '700', x: 926, y: 395, r: -90, w: 22, fill: teal },
  { text: '700', x: 525, y: 532, r: -90, w: 22, fill: teal },
  { text: 'C8@180', x: 787, y: 533, r: -90, w: 47, fill: teal },
  { text: '900', x: 815, y: 524, r: -90, w: 23, fill: teal },
  { text: '900', x: 815, y: 617, r: -90, w: 23, fill: teal },
  { text: '900', x: 1082, y: 524, r: -90, w: 23, fill: lime },
  { text: '900', x: 1082, y: 617, r: -90, w: 23, fill: lime },
  { text: '350', x: 623, y: 647, r: 0, w: 24, fill: lime },
  { text: '900', x: 693, y: 647, r: 0, w: 23, fill: lime }
]

const bubbles = [
  { t: '2', x: 646, y: 178 },
  { t: '3', x: 936, y: 178 },
  { t: '4', x: 1226, y: 178 },
  { t: 'C', x: 510, y: 360 },
  { t: 'B', x: 510, y: 568 },
  { t: 'B', x: 1354, y: 568 },
  { t: '2', x: 646, y: 686 },
  { t: '3', x: 936, y: 686 },
  { t: '4', x: 1226, y: 686 }
]

// axis bubbles are drawn as a ten sided ring in the CAD view
const ring = (cx: number, cy: number) => {
  const pts: string[] = []
  for (let i = 0; i < 10; i++) {
    const a = (Math.PI / 5) * i + Math.PI / 10
    pts.push(`${(cx + Math.cos(a) * 12).toFixed(1)},${(cy + Math.sin(a) * 12).toFixed(1)}`)
  }
  return pts.join(' ')
}
</script>

<style>
html,
body {
  margin: 0;
  padding: 0;
  background: #fff;
  overflow: hidden;
}
</style>

<style scoped>
.app {
  width: 1366px;
  height: 736px;
  display: flex;
  flex-direction: column;
  overflow: hidden;
  font-family: "Noto Sans", "Noto Sans CJK SC", sans-serif;
  font-size: 12px;
  color: #222;
  background: #fff;
}

.sprite {
  display: none;
}

i {
  display: block;
  font-style: normal;
}

.caret {
  width: 0;
  height: 0;
  border-left: 3.5px solid transparent;
  border-right: 3.5px solid transparent;
  border-top: 4px solid #666;
  flex: none;
}

.caret.pale {
  border-top-color: #b8b8b8;
}

.caret.white {
  border-top-color: #fff;
  border-left-width: 4px;
  border-right-width: 4px;
  position: absolute;
  right: 7px;
  top: 11px;
}

.caret.dark {
  border-top-color: #3c4a5c;
  border-left-width: 4px;
  border-right-width: 4px;
}

/* title and tabs */
.top {
  height: 41px;
  display: flex;
  flex: none;
}

.logo-col {
  width: 46px;
  flex: none;
  padding: 8px 0 0 9px;
  box-sizing: border-box;
  position: relative;
}

.logo {
  width: 28px;
  height: 28px;
  border-radius: 6px;
  background: linear-gradient(180deg, #3fb4f5, #0f78e4);
  color: #fff;
  font: 900 24px/28px "Liberation Sans", sans-serif;
  text-align: center;
}

.logo-corner {
  position: absolute;
  right: 5px;
  bottom: 2px;
  width: 0;
  height: 0;
  border-left: 4px solid transparent;
  border-bottom: 4px solid #888;
}

.top-main {
  flex: 1;
  border-left: 1px solid #ddd;
  display: flex;
  flex-direction: column;
  min-width: 0;
}

.title-row {
  height: 21px;
  display: flex;
  align-items: flex-start;
  flex: none;
}

.quick {
  width: 423px;
  flex: none;
  display: flex;
  align-items: center;
  height: 20px;
  padding: 2px 0 0 8px;
  box-sizing: border-box;
}

.qi {
  width: 16px;
  height: 16px;
  margin-right: 8px;
  flex: none;
}

.quick-caret {
  margin-right: 10px;
}

.sigma {
  width: 20px;
  margin-right: 10px;
  font: 700 16px/16px "Liberation Sans", sans-serif;
  color: #3a7fc8;
  text-align: center;
}

.overflow-mark {
  width: 7px;
  height: 5px;
  margin-left: 3px;
  border-top: 1px solid #666;
  position: relative;
}

.overflow-mark::after {
  content: "";
  position: absolute;
  top: 2px;
  left: 0;
  border-left: 3.5px solid transparent;
  border-right: 3.5px solid transparent;
  border-top: 3px solid #666;
}

.title {
  font-size: 12.5px;
  line-height: 20px;
  white-space: nowrap;
  color: #222;
}

.winctl {
  margin-left: auto;
  display: flex;
  align-items: center;
  height: 18px;
  width: 94px;
  flex: none;
  box-sizing: border-box;
}

.w-min {
  width: 6px;
  height: 2px;
  background: #666;
  margin-top: 8px;
}

.w-restore {
  width: 6px;
  height: 6px;
  border: 1px solid #555;
  margin-left: 30px;
  box-shadow: 2px -2px 0 -1px #fff, 2px -2px 0 0 #555;
}

.w-close {
  margin-left: 26px;
  font-size: 11px;
  color: #555;
}

.tab-row {
  height: 20px;
  display: flex;
  align-items: stretch;
  flex: none;
  padding-left: 2px;
}

.tab {
  flex: none;
  padding: 0 13px;
  line-height: 20px;
  font-size: 12px;
  white-space: nowrap;
}

.tab.active {
  background: #5aa9f5;
  color: #fff;
  border-radius: 2px 2px 0 0;
}

.search {
  margin-left: 528px;
  width: 245px;
  height: 18px;
  box-sizing: border-box;
  border: 1px solid #ccc;
  display: flex;
  align-items: center;
  justify-content: space-between;
  padding: 0 4px 0 3px;
  color: #c4c4c4;
  flex: none;
}

.search-ic {
  width: 14px;
  height: 14px;
}

.top-icons {
  display: flex;
  align-items: center;
  height: 18px;
  margin-left: 8px;
}

.ti {
  width: 18px;
  height: 18px;
  flex: none;
}

.ti.chat {
  margin-left: 7px;
  width: 16px;
  height: 16px;
}

.ti.head {
  margin-left: 7px;
  width: 14px;
  height: 14px;
}

.help {
  margin-left: 8px;
  font: 700 15px/18px "Liberation Sans", sans-serif;
  color: #aaa;
}

.help-caret {
  margin-left: 3px;
}

.ti.shirt {
  margin-left: 8px;
  width: 14px;
  height: 14px;
}

.ti.up {
  margin-left: 9px;
  width: 14px;
  height: 14px;
}

/* ribbon */
.ribbon {
  height: 97px;
  flex: none;
  display: flex;
  background: linear-gradient(180deg, #fff 0, #fff 45%, #e8ecee 100%);
  border-top: 1px solid #d8d8d8;
  border-bottom: 1px solid #a5a8ab;
  box-sizing: border-box;
}

.group {
  flex: none;
  display: flex;
  flex-direction: column;
  box-sizing: border-box;
  height: 93px;
  margin-top: 2px;
  border-right: 1px solid #cfd3d6;
  box-shadow: 1px 0 0 #fff;
}

.group-body {
  height: 73px;
  padding-top: 1px;
  display: flex;
  box-sizing: border-box;
  position: relative;
}

.group-label {
  height: 17px;
  margin: 0 0 0 2px;
  display: flex;
  align-items: center;
  justify-content: center;
  gap: 7px;
  line-height: 17px;
}

.group-label.framed {
  border: 1px solid #90c4f5;
  background: #eef6fe;
  box-sizing: border-box;
  margin-right: -1px;
}

.big-sel {
  width: 40px;
  height: 67px;
  margin-top: 1px;
  background: #c6d6ec;
  display: flex;
  flex-direction: column;
  align-items: center;
  margin-right: 5px;
  flex: none;
}

.big-sel-ic {
  width: 30px;
  height: 30px;
  margin-top: 2px;
}

.big-sel span {
  margin-top: 4px;
  font-size: 12px;
}

.col {
  display: flex;
  flex-direction: column;
  flex: none;
}

.item {
  height: 22.5px;
  display: flex;
  align-items: center;
  gap: 1px;
  white-space: nowrap;
}

.item .caret {
  margin-left: 5px;
}

.item.off {
  color: #b0b0b0;
}

.item.hi {
  background: #c6d6ec;
  margin-right: -4px;
  padding-right: 22px;
  height: 19px;
  margin-top: 1px;
  margin-bottom: 2.5px;
}

.item-ic {
  width: 18px;
  height: 18px;
  flex: none;
}

.group:nth-child(6) .item {
  padding-left: 5px;
}

.flag-ic {
  width: 18px;
  height: 18px;
  margin: 2px 0 0 0;
  flex: none;
}

.big-draw {
  width: 44px;
  display: flex;
  flex-direction: column;
  align-items: center;
  color: #b0b0b0;
  flex: none;
}

.big-draw svg {
  width: 36px;
  height: 36px;
  margin-top: 1px;
}

.big-draw span {
  margin-top: 1px;
}

.draw-small {
  display: flex;
  flex-direction: column;
  gap: 5px;
  margin-left: -1px;
  padding-top: 1px;
}

.draw-small svg {
  width: 18px;
  height: 18px;
}

/* selectors */
.combos {
  height: 27px;
  flex: none;
  background: #c8cbce;
  box-sizing: border-box;
  padding: 4px 0 0 3px;
  display: flex;
  gap: 2px;
}

.combo {
  width: 98px;
  height: 21px;
  box-sizing: border-box;
  background: #fff;
  display: flex;
  align-items: center;
  justify-content: space-between;
  padding: 0 3px 0 3px;
  white-space: nowrap;
  font-size: 12px;
}

.combo .caret {
  margin-left: 1px;
}

/* main row */
.main {
  height: 532px;
  flex: none;
  display: flex;
  background: #e9eaec;
  border-top: 1px solid #8e9498;
  box-sizing: border-box;
}

.nav {
  width: 210px;
  flex: none;
  box-sizing: border-box;
  display: flex;
  flex-direction: column;
  background: #fff;
  border-right: 1px solid #c8cacc;
  border-left: 1px solid #c8cacc;
}

.strip {
  height: 11px;
  flex: none;
  margin-top: 1px;
  background: #d5d7db;
  display: flex;
  justify-content: flex-end;
  align-items: center;
  padding-right: 4px;
}

.x {
  font-size: 8px;
  line-height: 10px;
  font-weight: 700;
  color: #888;
}

.nav-title {
  height: 22px;
  line-height: 21px;
  flex: none;
  background: #eee;
  border-bottom: 1px solid #c8cacc;
  padding-left: 8px;
  color: #999;
  font-weight: 700;
  box-sizing: border-box;
}

.nav-tools {
  height: 28px;
  flex: none;
  background: #f0f0f0;
  border-bottom: 1px solid #c8cacc;
  display: flex;
  align-items: center;
  box-sizing: border-box;
  padding: 0 2px 0 7px;
  gap: 4px;
}

.spark {
  width: 14px;
  height: 11px;
  margin-right: auto;
}

.view-btn {
  width: 23px;
  height: 21px;
  box-sizing: border-box;
  border: 1px solid #7eb8f0;
  border-radius: 3px;
  background: #f8fbfe;
  display: flex;
  align-items: center;
  justify-content: center;
}

.view-btn svg {
  width: 13px;
  height: 12px;
}

.tree {
  flex: 1;
  position: relative;
  overflow: hidden;
  padding-top: 3px;
  min-height: 0;
}

.tree-row {
  height: 24px;
  display: flex;
  align-items: center;
  white-space: nowrap;
}

.folder {
  width: 15px;
  height: 12px;
  margin: 0 5px 0 3px;
  flex: none;
}

.tree-child {
  margin-left: 40px;
  height: 23px;
  display: flex;
  align-items: center;
  padding: 0 6px 0 3px;
  gap: 6px;
}

.tree-child.sel {
  background: #c6daf3;
}

.child-ic {
  width: 16px;
  height: 16px;
  flex: none;
}

.vbar {
  position: absolute;
  width: 8px;
  background: #ccc;
  border-radius: 4px;
}

.tree-bar {
  left: 197px;
  top: 65px;
  height: 308px;
}

.mid {
  width: 280px;
  margin-left: 4px;
  flex: none;
  display: flex;
  flex-direction: column;
  gap: 4px;
}

.panel {
  position: relative;
  background: #fff;
  border: solid #c8cacc;
  border-width: 0 1px 1px;
  display: flex;
  flex-direction: column;
  overflow: hidden;
  box-sizing: border-box;
}

.drawing {
  height: 264px;
  flex: none;
}

.props {
  flex: 1;
  min-height: 0;
}

.tabs {
  height: 21px;
  flex: none;
  display: flex;
  background: #eee;
  border-bottom: 1px solid #c8cacc;
}

.props .tabs {
  height: 22px;
  margin-bottom: 1px;
}

.ptab {
  width: 64px;
  box-sizing: border-box;
  text-align: center;
  line-height: 21px;
  color: #999;
  font-weight: 700;
  background: #e2e3e5;
  border-right: 1px solid #c8cacc;
}

.ptab.on {
  background: #f1f1f1;
  color: #333;
}

.draw-tools {
  height: 30px;
  flex: none;
  display: flex;
  align-items: center;
  background: #f1f1f1;
  padding-left: 6px;
  color: #444;
}

.dt {
  display: flex;
  align-items: center;
  margin-right: 9px;
}

.dt-ic {
  width: 16px;
  height: 16px;
  margin-right: 4px;
}

.dt .caret {
  margin-left: 6px;
}

.sheet {
  height: 186px;
  flex: none;
  overflow: hidden;
  width: 265px;
}

.sheet-head {
  display: grid;
  grid-template-columns: 171px 35px 58px;
  height: 24px;
  line-height: 24px;
  text-align: center;
  background: #eee;
  color: #444;
}

.sheet-head > div {
  border-right: 1px solid #ddd;
}

.name-h {
  background: #7ab6f5;
  color: #fff;
  font-weight: 700;
}

.sheet-group {
  height: 21px;
  display: flex;
  align-items: center;
  border-bottom: 1px solid #ddd;
  box-sizing: border-box;
  white-space: nowrap;
}

.expander {
  width: 11px;
  height: 11px;
  box-sizing: border-box;
  margin: 0 7px 0 3px;
  border: 1px solid #888;
  border-radius: 2px;
  background: linear-gradient(#666, #666) center / 5px 1px no-repeat;
}

.sheet-row {
  height: 21px;
  display: grid;
  grid-template-columns: 171px 35px 58px;
  box-sizing: border-box;
  border-bottom: 1px solid #ddd;
  line-height: 20px;
}

.sheet-name {
  white-space: nowrap;
  overflow: hidden;
  display: flex;
  align-items: center;
  border-right: 1px solid #ddd;
}

.branch {
  width: 18px;
  height: 21px;
  margin: -2px 6px 0 7px;
  flex: none;
  box-sizing: border-box;
  border-left: 1px solid #ddd;
  background: linear-gradient(#ddd, #ddd) left 10px / 100% 1px no-repeat;
}

.sheet-lock {
  display: flex;
  align-items: center;
  justify-content: center;
  border-right: 1px solid #ddd;
}

.sheet-lock svg {
  width: 12px;
  height: 14px;
}

.sheet-floor {
  padding-left: 3px;
  white-space: nowrap;
}

.sheet-row.sel {
  background: #d6e9fb;
}

.sheet-row.sel .sheet-name {
  background: #dfeaf5;
  outline: 2px solid #777;
  outline-offset: -2px;
}

.hbar-row {
  flex: 1;
  min-height: 0;
  padding: 2px 0 0 14px;
}

.hbar {
  width: 157px;
  height: 8px;
  background: #ccc;
  border-radius: 4px;
}

.sheet-bar {
  left: 267px;
  top: 127px;
  height: 58px;
}

.prop-table {
  width: 262px;
  flex: none;
}

.prop-row {
  display: grid;
  grid-template-columns: 21px 101px 99px 41px;
  height: 21px;
  box-sizing: border-box;
  border-bottom: 1px solid #ddd;
  line-height: 20px;
  white-space: nowrap;
}

.prop-row > div {
  border-right: 1px solid #ddd;
}

.prop-head {
  height: 21px;
  background: #eee;
  text-align: center;
  color: #444;
}

.idx {
  background: #eee;
  text-align: center;
  color: #333;
}

.pname {
  padding-left: 3px;
}

.pname.link {
  color: #2f6fe0;
}

.pval {
  padding-left: 3px;
  overflow: hidden;
}

.pval.ro {
  background: #e8e8e8;
  color: #999;
}

.bar-mark {
  font-size: 9px;
  line-height: 1;
  vertical-align: 3px;
  margin-right: 1px;
}

.padd {
  display: flex;
  align-items: center;
  justify-content: center;
}

.chk {
  width: 13px;
  height: 13px;
  box-sizing: border-box;
  border: 1px solid #888;
  border-radius: 2px;
  background: #fff;
}

.prop-bar {
  left: 267px;
  top: 49px;
  height: 138px;
}

.splitter {
  width: 4px;
  flex: none;
  background: linear-gradient(#fff 218px, #8a8d90 218px, #8a8d90 318px, #fff 318px);
}

/* drawing area */
.canvas {
  width: 868px;
  flex: none;
  position: relative;
  overflow: hidden;
  height: 532px;
  margin-top: -1px;
  background: #000;
}

.cad {
  display: block;
}

.palette {
  position: absolute;
  left: 0;
  top: 1px;
  width: 146px;
  height: 117px;
  box-sizing: border-box;
  background: #1f4e7f;
  border: 1px solid #2a69a8;
  border-left: 0;
  color: #f2f6fa;
}

.pal-head {
  height: 12px;
  background: #1a3f66;
  display: flex;
  justify-content: flex-end;
  align-items: center;
  padding-right: 4px;
  margin-bottom: 7px;
}

.pal-head .x {
  color: #a8c4e0;
}

.pal-btn {
  width: 132px;
  height: 25px;
  box-sizing: border-box;
  margin: 0 0 7px 7px;
  background: #22568a;
  border: 1px solid #173e66;
  border-radius: 3px;
  line-height: 24px;
  text-align: center;
  position: relative;
}

.pal-drop {
  padding-right: 12px;
}

.rtools {
  position: absolute;
  right: 0;
  top: 1px;
  width: 33px;
  height: 227px;
  box-sizing: border-box;
  background: linear-gradient(90deg, #969da4, #8a9299);
  border: 1px solid #c6cacd;
  border-right: 0;
  display: flex;
  flex-direction: column;
  align-items: center;
  padding-top: 11px;
}

.rtools svg {
  width: 24px;
  height: 24px;
  margin-bottom: 4px;
  flex: none;
}

.rtools .caret {
  margin: 2px 0 6px;
}

.rtools hr {
  width: 24px;
  margin: -2px 0 4px;
  border: 0;
  border-top: 1px solid #555e66;
}

/* status */
.status {
  height: 31px;
  flex: none;
  display: flex;
  align-items: center;
  background: #dcdde0;
  color: #333;
  border-bottom: 1px solid #c8dcc8;
  box-sizing: border-box;
  padding-top: 2px;
  white-space: nowrap;
}

.st {
  flex: none;
}

.coords {
  width: 263px;
  padding-left: 2px;
  box-sizing: content-box;
  font-size: 13px;
}

.s-floor {
  width: 83px;
}

.s-elev {
  width: 137px;
}

.s-zero {
  width: 99px;
}

.s-hide {
  width: 103px;
}

.sb {
  height: 25px;
  box-sizing: border-box;
  border: 1px solid #999;
  background: #d6d7da;
  display: flex;
  align-items: center;
  flex: none;
  margin-right: 4px;
  padding: 0;
}

.sb svg {
  height: 23px;
  width: 23px;
  flex: none;
}

.sb .caret {
  margin-left: 2px;
}

.sb.on {
  background: #fff;
  border-color: #3a95ef;
  margin-right: 6px;
}

.sb.dim {
  border-color: #bbb;
  margin-right: 7px;
}

.w25 {
  width: 25px;
}

.w35 {
  width: 35px;
}

.w24 {
  width: 24px;
}

.w36 {
  width: 36px;
  margin-right: 3px;
}

.sb.text {
  justify-content: center;
  margin-right: 6px;
}

.w70 {
  width: 70px;
}

.w60 {
  width: 60px;
}

.hint {
  margin-left: 1px;
  width: 276px;
}

.taskbar {
  height: 8px;
  flex: none;
  position: relative;
  background: #e3deee;
  overflow: hidden;
  display: flex;
}

.seg {
  height: 8px;
  flex: none;
}

.seg-a {
  width: 48px;
}

.seg-b {
  width: 343px;
  background: #fff;
}

.seg-c {
  width: 149px;
}

.seg-d {
  width: 48px;
  background: #f0eef6;
}

.clock {
  position: absolute;
  left: 1263px;
  top: 3px;
  font-size: 12px;
  line-height: 14px;
  color: #222;
}

.tb-line {
  position: absolute;
  left: 1358px;
  top: 0;
  width: 1px;
  height: 8px;
  background: #999;
}
</style>
